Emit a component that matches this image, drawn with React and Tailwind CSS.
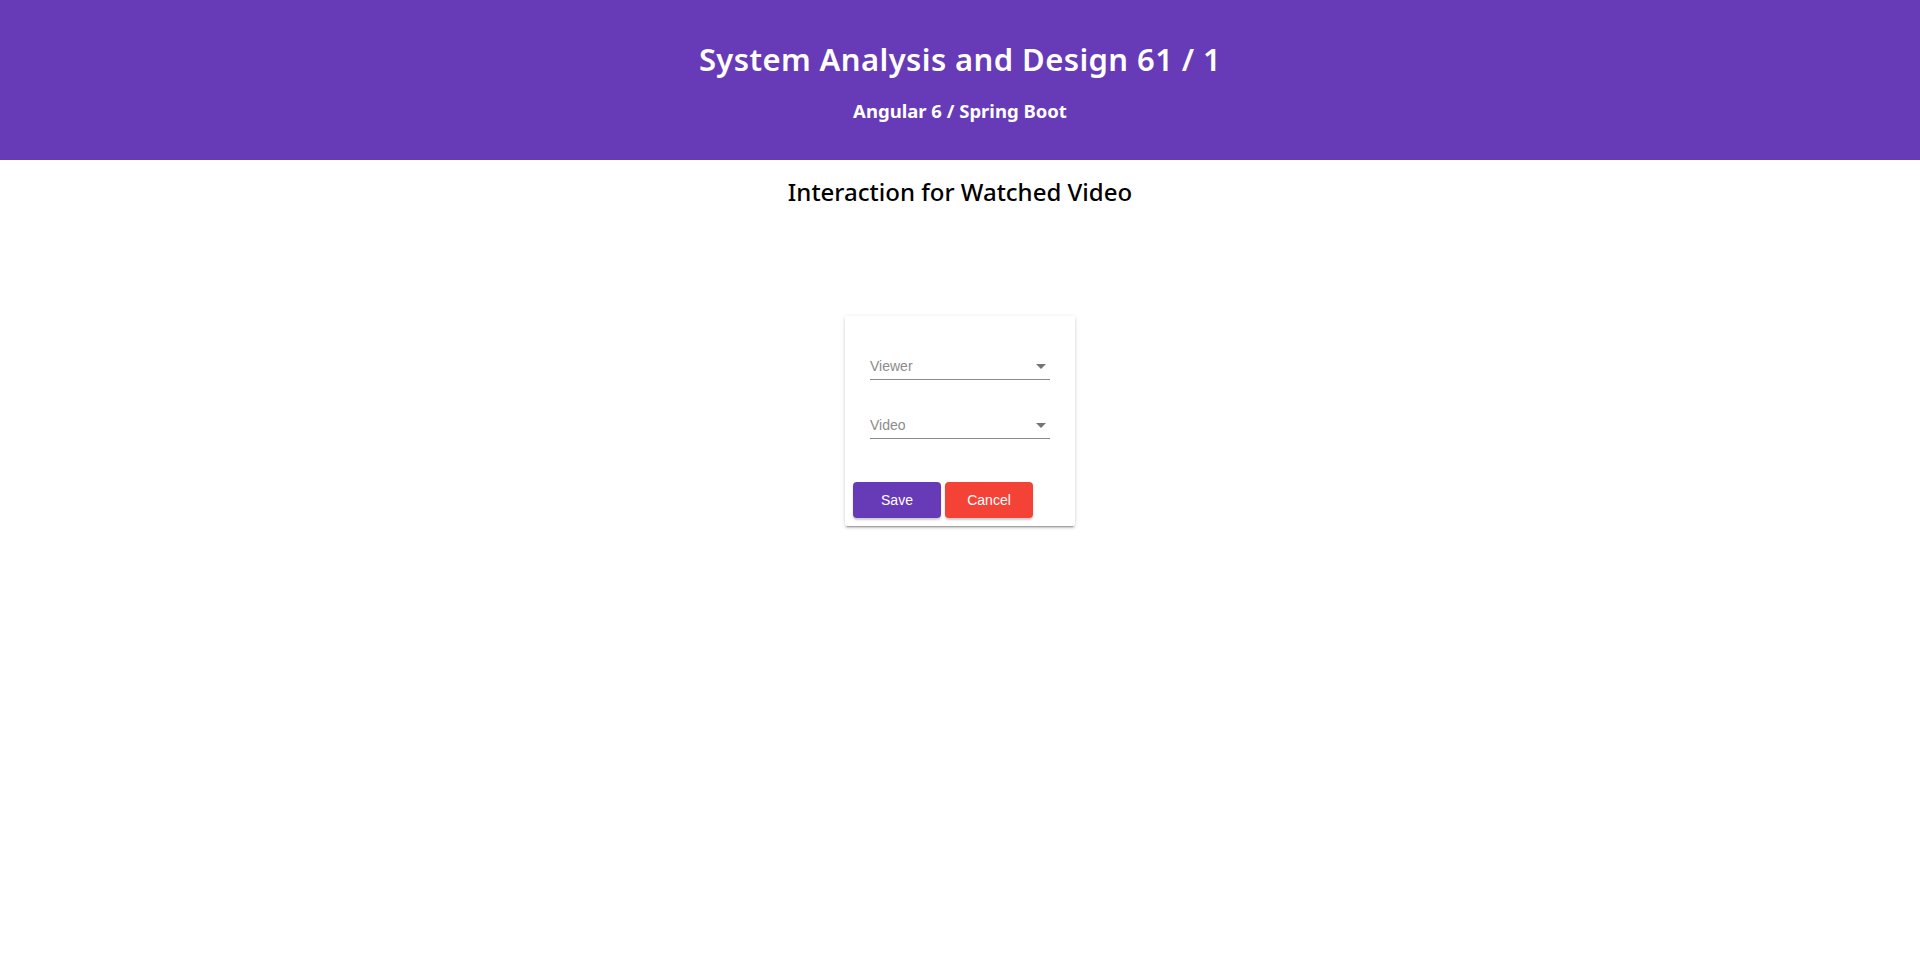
const rounded = { fontFamily: '"Noto Sans", "Open Sans", sans-serif' }

function SelectField({ label }) {
  return (
    <div className="flex items-center justify-between border-b border-[#8a8a8a] pb-[3px]">
      <span className="text-[14px] leading-5 text-[#8c8c8c] font-['Liberation_Sans',Arial,sans-serif]">{label}</span>
      <span className="mx-[4px] h-0 w-0 border-x-[5px] border-t-[5px] border-x-transparent border-t-[#757575]" />
    </div>
  )
}

export default function App() {
  return (
    <div className="min-h-[969px] bg-white">
      <header className="flex h-[160px] flex-col items-center bg-[#673ab7] pt-[39px] text-white" style={rounded}>
        <h1 className="text-[31px] leading-10 font-semibold tracking-[0.4px]">System Analysis and Design 61 / 1</h1>
        <h3 className="mt-[20px] text-[18.5px] leading-6 font-bold">Angular 6 / Spring Boot</h3>
      </header>

      <h2 className="mt-[16px] text-center text-[24px] leading-8 font-medium text-black" style={rounded}>
        Interaction for Watched Video
      </h2>

      <div className="mt-[108px] flex justify-center">
        <div className="w-[230px] rounded-[2px] bg-white px-[8px] pt-[40px] pb-[8px] shadow-[0_3px_1px_-2px_rgba(0,0,0,0.2),0_2px_2px_0_rgba(0,0,0,0.14),0_1px_5px_0_rgba(0,0,0,0.12)]">
          <div className="px-[17px]">
            <SelectField label="Viewer" />
            <div className="h-[35px]" />
            <SelectField label="Video" />
          </div>
          <div className="mt-[43px] flex gap-[4px] font-['Liberation_Sans',Arial,sans-serif]">
            <button className="h-[36px] w-[88px] rounded-[4px] bg-[#673ab7] text-[14px] text-white shadow-[0_2px_2px_rgba(0,0,0,0.2)]">Save</button>
            <button className="h-[36px] w-[88px] rounded-[4px] bg-[#f44336] text-[14px] text-white shadow-[0_2px_2px_rgba(0,0,0,0.2)]">Cancel</button>
          </div>
        </div>
      </div>
    </div>
  )
}
